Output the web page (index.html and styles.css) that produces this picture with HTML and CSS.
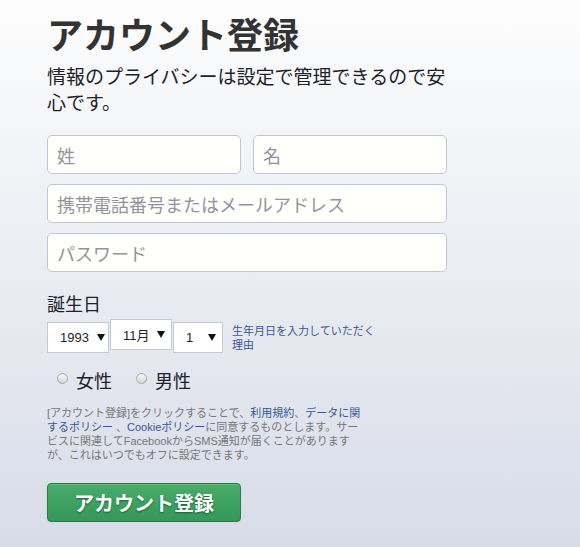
FILE: index.html
```html
<!DOCTYPE html>
<html lang="ja">
<head>
  <meta charset="UTF-8">
  <title>アカウント登録</title>
  <meta name="viewport" content="width=device-width, initial-scale=1.0">
  <link rel="stylesheet" href="styles.css">
</head>
<body>
  <main class="signup">
    <h1 class="title">アカウント登録</h1>
    <p class="lead">情報のプライバシーは設定で管理できるので安心です。</p>

    <form class="fields" onsubmit="return false">
      <div class="name-row">
        <input class="field" type="text" placeholder="姓">
        <input class="field" type="text" placeholder="名">
      </div>
      <input class="field" type="text" placeholder="携帯電話番号またはメールアドレス">
      <input class="field" type="password" placeholder="パスワード">

      <div class="section-label">誕生日</div>
      <div class="birthday">
        <div class="picker">
          <div class="select year">1993</div>
          <div class="select month">11月</div>
          <div class="select day">1</div>
        </div>
        <a class="hint" href="#">生年月日を入力していただく理由</a>
      </div>

      <div class="gender">
        <label><span class="radio"></span>女性</label>
        <label><span class="radio"></span>男性</label>
      </div>

      <p class="terms">
        [アカウント登録]をクリックすることで、<a href="#">利用規約</a>、<a href="#">データに関するポリシー</a> 、<a href="#">Cookieポリシー</a>に同意するものとします。サービスに関連してFacebookからSMS通知が届くことがありますが、これはいつでもオフに設定できます。
      </p>

      <button class="submit" type="submit">アカウント登録</button>
    </form>
  </main>
</body>
</html>
```

FILE: styles.css
```css
* {
  box-sizing: border-box;
}

html {
  height: 100%;
}

/* pale grey-blue gradient behind the form */
body {
  margin: 0;
  min-height: 100%;
  padding: 11px 0 0 47px;
  font-family: "Noto Sans CJK JP", sans-serif;
  color: #1d2129;
  background: linear-gradient(#fdfdfd, #d8dce8);
}

.signup {
  width: 400px;
}

.title {
  margin: 0;
  font-size: 36px;
  line-height: 44px;
  font-weight: bold;
  color: #333;
}

.lead {
  margin: 8px 0 0;
  font-size: 19px;
  line-height: 26px;
}

.fields {
  display: flex;
  flex-direction: column;
  gap: 10px;
  margin-top: 20px;
}

.name-row {
  display: flex;
  gap: 12px;
}

.field {
  width: 100%;
  height: 39px;
  padding: 0 9px;
  border: 1px solid #bdc7d8;
  border-radius: 5px;
  background: #fffffb;
  font: 18px "Noto Sans CJK JP", sans-serif;
  color: #1d2129;
}

.name-row .field {
  flex: 1;
  width: 0;
}

.field::placeholder {
  color: #90949c;
}

.section-label {
  margin-top: 10px;
  font-size: 18px;
  line-height: 22px;
}

/* date pickers + "why" link */
.birthday {
  display: flex;
  align-items: flex-start;
  margin-top: -5px;
}

.picker {
  display: flex;
  align-items: flex-end;
  gap: 1px;
}

.select {
  display: flex;
  align-items: center;
  justify-content: space-between;
  height: 31px;
  padding: 0 6px 0 12px;
  background: #fff;
  border: 1px solid #c3cbd9;
  font: 13px "Liberation Sans", "Noto Sans CJK JP", sans-serif;
  color: #1d2129;
}

.select::after {
  content: "";
  border-left: 4px solid transparent;
  border-right: 4px solid transparent;
  border-top: 7px solid #111;
}

.year { width: 62px; padding-right: 3px; }
.month { width: 62px; margin-bottom: 3px; }
.day { width: 50px; }

.hint {
  width: 150px;
  margin: 5px 0 0 9px;
  font: 11px/14px "Liberation Sans", "Noto Sans CJK JP", sans-serif;
  color: #365899;
  text-decoration: none;
}

.gender {
  display: flex;
  gap: 24px;
  margin: 6px 0 0 10px;
  font-size: 18px;
  line-height: 22px;
}

.gender label {
  display: flex;
  align-items: center;
  gap: 8px;
}

.radio {
  width: 11px;
  height: 11px;
  margin-top: -4px;
  border-radius: 50%;
  border: 1px solid #a8a8a8;
  background: linear-gradient(#fafafa, #d4d4d4);
}

.terms {
  width: 318px;
  margin: 5px 0 0;
  font: 11px/14px "Liberation Sans", "Noto Sans CJK JP", sans-serif;
  color: #777;
}

.terms a {
  color: #365899;
  text-decoration: none;
}

.submit {
  width: 194px;
  height: 39px;
  margin-top: 11px;
  border: 1px solid #2b7a45;
  border-radius: 4px;
  background: linear-gradient(#47ad6a, #35975a);
  box-shadow: inset 0 1px 0 rgba(255, 255, 255, 0.15);
  color: #fff;
  font: bold 20px "Noto Sans CJK JP", sans-serif;
  text-shadow: 0 1px 2px rgba(0, 0, 0, 0.45);
  cursor: pointer;
}
```
